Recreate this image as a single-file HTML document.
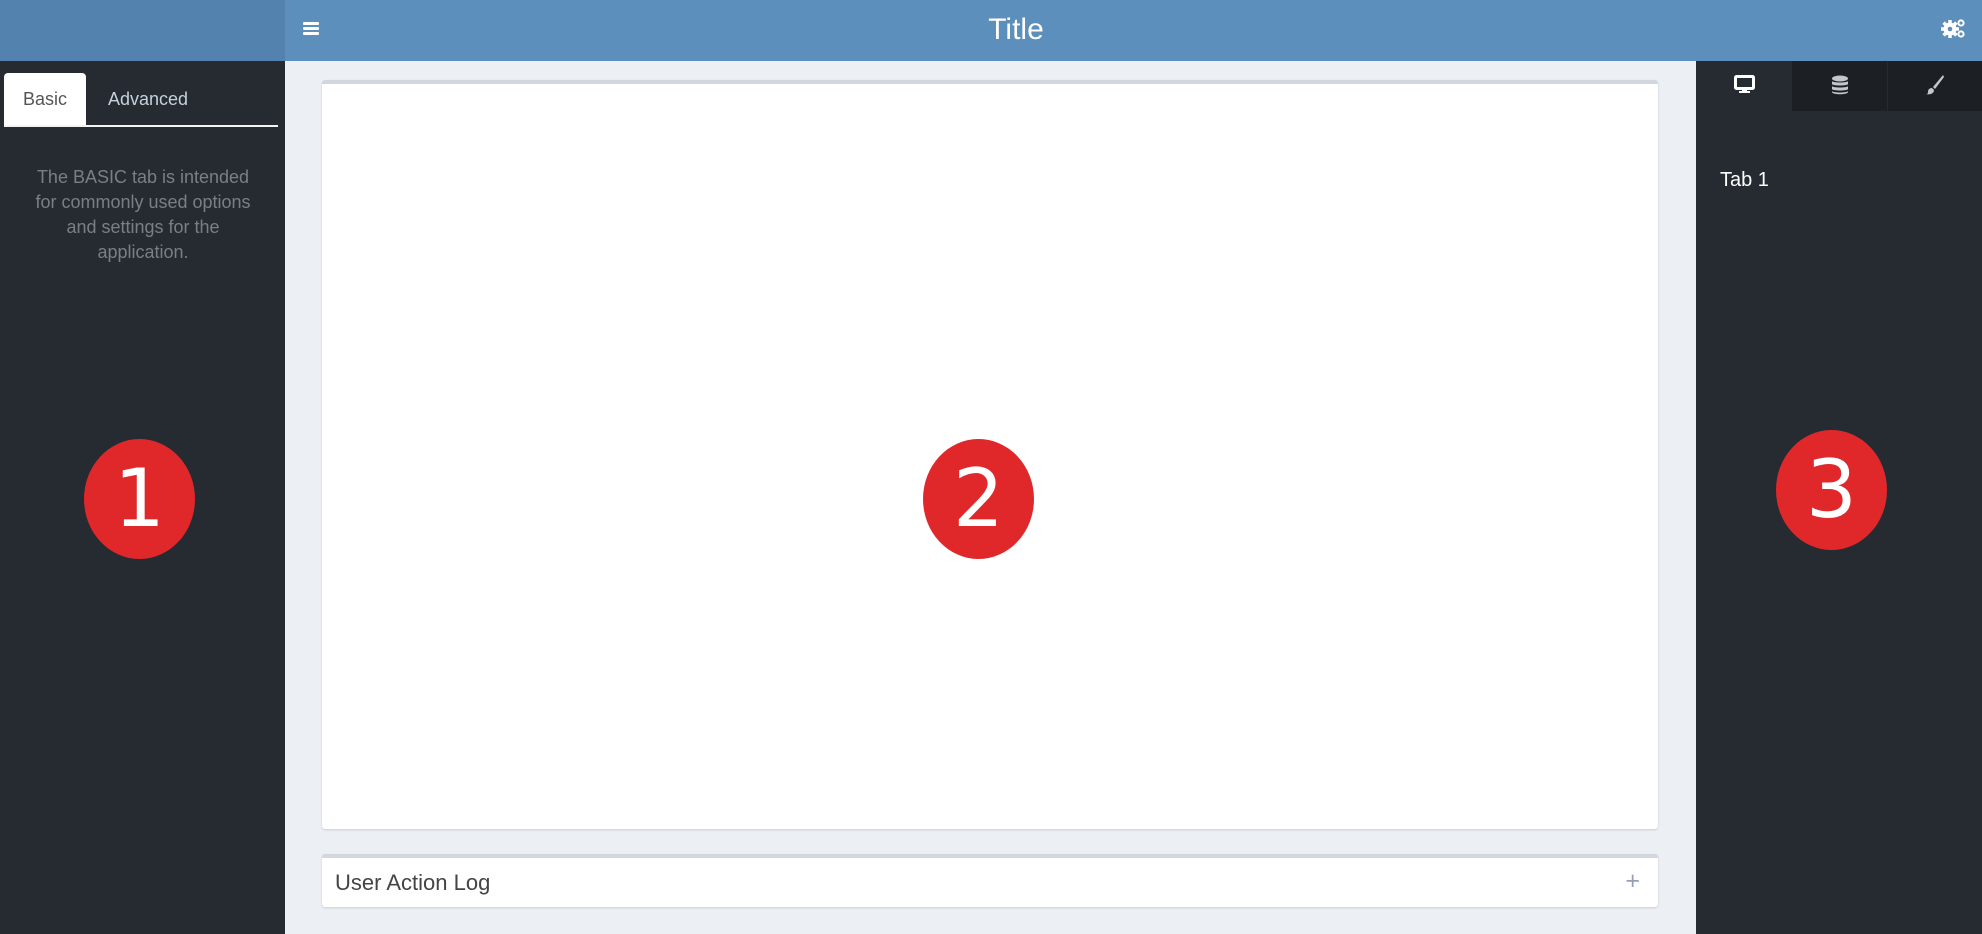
<!DOCTYPE html>
<html><head><style>
*{margin:0;padding:0;box-sizing:border-box}
body{width:1982px;height:934px;overflow:hidden;background:#ecf0f5;font-family:"Liberation Sans",sans-serif;position:relative}
.hdr{position:absolute;left:0;top:0;width:1982px;height:61px;background:#5c8fbb}
.hdrl{position:absolute;left:0;top:0;width:285px;height:61px;background:#5282ad}
.title{position:absolute;left:0;width:1982px;top:13px;text-align:center;color:#fff;font-size:30px;padding-left:50px}
.left{position:absolute;left:0;top:61px;width:285px;height:873px;background:#252b31}
.right{position:absolute;left:1696px;top:61px;width:286px;height:873px;background:#252b31}
.circ{position:absolute;width:111px;height:120px;border-radius:50%;background:#e0282b;color:#fff;font-family:"DejaVu Sans ExtraLight","DejaVu Sans",sans-serif;font-size:80px;text-align:center;line-height:120px}
.box{position:absolute;left:322px;width:1336px;background:#fff;border-top:4px solid #d2d6de;border-radius:3px;box-shadow:0 1px 2px rgba(0,0,0,.15)}
</style></head><body>
<div class="hdr"></div><div class="hdrl"></div>
<div class="title">Title</div>
<div style="position:absolute;left:303px;top:22px;width:16px">
<div style="height:3px;background:#fff;margin-bottom:2px;border-radius:1px"></div><div style="height:3px;background:#fff;margin-bottom:2px;border-radius:1px"></div><div style="height:3px;background:#fff;border-radius:1px"></div></div>
<svg style="position:absolute;left:1941px;top:18px" width="24" height="22" viewBox="0 0 24 22"><g stroke="#fff" stroke-width="3.5"><line x1="9" y1="2" x2="9" y2="20"/><line x1="0" y1="11" x2="18" y2="11"/><line x1="2.6" y1="4.6" x2="15.4" y2="17.4"/><line x1="2.6" y1="17.4" x2="15.4" y2="4.6"/></g><circle cx="9" cy="11" r="6.5" fill="#fff"/><circle cx="9" cy="11" r="2.3" fill="#5c8fbb"/><circle cx="20" cy="5" r="2.6" fill="none" stroke="#fff" stroke-width="2"/><circle cx="20" cy="16" r="2.6" fill="none" stroke="#fff" stroke-width="2"/></svg>
<div class="left">
<div style="position:absolute;left:4px;top:12px;width:82px;height:52px;background:#fff;border-radius:4px 4px 0 0;color:#555;font-size:18px;text-align:center;line-height:52px">Basic</div>
<div style="position:absolute;left:108px;top:12px;height:52px;line-height:52px;color:#c5d0da;font-size:18px">Advanced</div>
<div style="position:absolute;left:4px;top:64px;width:274px;height:2px;background:#f4f4f4"></div>
<div style="position:absolute;left:26px;top:104px;width:234px;text-align:center;color:#7b7f82;font-size:18px;line-height:25px">The BASIC tab is intended for commonly used options and settings for the application.</div>
</div>
<div class="circ" style="left:84px;top:439px">1</div>
<div class="box" style="top:80px;height:749px"></div>
<div class="circ" style="left:923px;top:439px">2</div>
<div class="box" style="top:854px;height:53px"><div style="position:absolute;left:13px;top:12px;font-size:22px;color:#444">User Action Log</div><div style="position:absolute;right:18px;top:9px;font-size:25px;color:#97a0b3">+</div></div>
<div class="right">
<div style="position:absolute;left:96px;top:0;width:190px;height:50px;background:#1c2024"></div>
<div style="position:absolute;left:191px;top:0;width:1px;height:50px;background:#252b31"></div>
<svg style="position:absolute;left:38px;top:14px" width="21" height="20" viewBox="0 0 21 20"><rect x="1.5" y="1.5" width="18" height="12" fill="none" stroke="#fff" stroke-width="3" rx="1"/><rect x="8" y="14" width="5" height="3" fill="#fff"/><rect x="5" y="16" width="11" height="2" fill="#fff"/></svg>
<svg style="position:absolute;left:135px;top:14px" width="18" height="20" viewBox="0 0 18 20"><ellipse cx="9" cy="3.5" rx="8" ry="3" fill="#c2c7cc"/><path d="M1 6v3c0 2 16 2 16 0V6c0 2-16 2-16 0zM1 11v3c0 2 16 2 16 0v-3c0 2-16 2-16 0zM1 16v1c0 3 16 3 16 0v-1c0 2-16 2-16 0z" fill="#c2c7cc"/></svg>
<svg style="position:absolute;left:229px;top:13px" width="20" height="22" viewBox="0 0 20 22"><path d="M18 1L8 13l2 2L19 3z" fill="#c2c7cc"/><path d="M7 14c-3 0-4 2-4 4s-1 2-2 2c3 1 8 0 8-4z" fill="#c2c7cc"/></svg>
<div style="position:absolute;left:24px;top:108px;color:#fff;font-size:20px">Tab 1</div>
</div>
<div class="circ" style="left:1776px;top:430px">3</div>
</body></html>
